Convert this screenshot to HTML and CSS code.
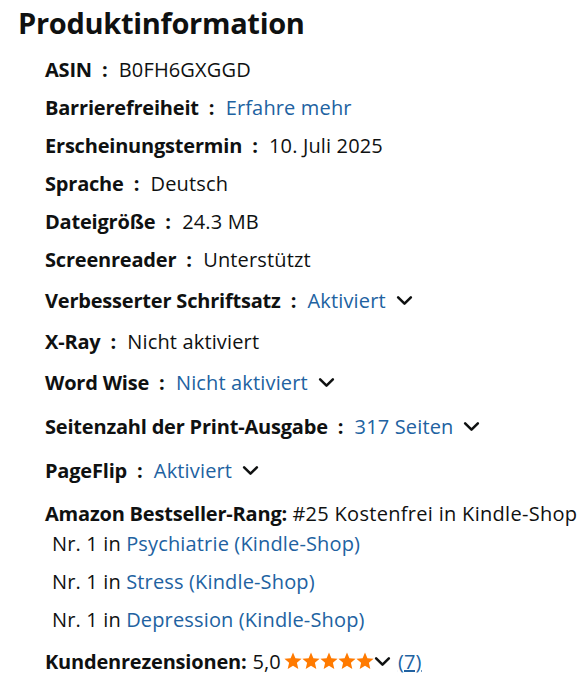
FILE: index.html
```html
<!DOCTYPE html>
<html lang="de">
<head>
<meta charset="utf-8">
<link rel="stylesheet" href="styles.css">
</head>
<body>
<div class="page">
  <h2 class="title">Produktinformation</h2>
  <ul class="details">
    <li class="row"><span class="label">ASIN</span><span class="sep">:</span><span>B0FH6GXGGD</span></li>
    <li class="row"><span class="label">Barrierefreiheit</span><span class="sep">:</span><a class="link">Erfahre mehr</a></li>
    <li class="row"><span class="label">Erscheinungstermin</span><span class="sep">:</span><span>10. Juli 2025</span></li>
    <li class="row"><span class="label">Sprache</span><span class="sep">:</span><span>Deutsch</span></li>
    <li class="row"><span class="label">Dateigröße</span><span class="sep">:</span><span>24.3 MB</span></li>
    <li class="row"><span class="label">Screenreader</span><span class="sep">:</span><span>Unterstützt</span></li>
    <li class="row tall"><span class="label">Verbesserter Schriftsatz</span><span class="sep">:</span><a class="link">Aktiviert</a><svg class="chev" viewBox="0 0 16 10"><path d="M2 2 L8 8 L14 2"/></svg></li>
    <li class="row"><span class="label">X-Ray</span><span class="sep">:</span><span>Nicht aktiviert</span></li>
    <li class="row tall"><span class="label">Word Wise</span><span class="sep">:</span><a class="link">Nicht aktiviert</a><svg class="chev" viewBox="0 0 16 10"><path d="M2 2 L8 8 L14 2"/></svg></li>
    <li class="row tall"><span class="label">Seitenzahl der Print-Ausgabe</span><span class="sep">:</span><a class="link">317 Seiten</a><svg class="chev" viewBox="0 0 16 10"><path d="M2 2 L8 8 L14 2"/></svg></li>
    <li class="row tall"><span class="label">PageFlip</span><span class="sep">:</span><a class="link">Aktiviert</a><svg class="chev" viewBox="0 0 16 10"><path d="M2 2 L8 8 L14 2"/></svg></li>
    <li class="rank">
      <div><span class="label">Amazon Bestseller-Rang:</span> <span class="wide">#25 Kostenfrei in Kindle-Shop</span></div>
      <ul class="ranks">
        <li>Nr. 1 in <a class="link">Psychiatrie (Kindle-Shop)</a></li>
        <li>Nr. 1 in <a class="link">Stress (Kindle-Shop)</a></li>
        <li>Nr. 1 in <a class="link">Depression (Kindle-Shop)</a></li>
      </ul>
    </li>
    <li class="reviews"><span class="label">Kundenrezensionen:</span><span class="score">5,0</span><span class="stars"><svg viewBox="0 0 90 18"><g fill="#ff7a00"><path id="s" d="M9 0.6 L11.4 6.3 L17.6 6.8 L12.9 10.8 L14.3 16.9 L9 13.7 L3.7 16.9 L5.1 10.8 L0.4 6.8 L6.6 6.3 Z"/><use href="#s" x="18"/><use href="#s" x="36"/><use href="#s" x="54"/><use href="#s" x="72"/></g></svg></span><svg class="chev small" viewBox="0 0 16 10"><path d="M2 2 L8 8 L14 2"/></svg><a class="link under">(7)</a></li>
  </ul>
</div>
</body>
</html>
```
FILE: styles.css
```css
* { box-sizing: border-box; }
body {
  margin: 0;
  background: #fff;
  color: #0f1111;
  font-family: "Open Sans", "Noto Sans", Arial, sans-serif;
}
.page {
  padding: 3px 0 0 18px;
}
.title {
  margin: 0;
  font-size: 29px;
  font-weight: 700;
  line-height: 40px;
  letter-spacing: -0.3px;
}
.details {
  list-style: none;
  margin: 7px 0 0 0;
  padding: 0 0 0 27px;
  font-size: 20px;
  letter-spacing: 0.15px;
}
.row {
  display: flex;
  align-items: center;
  height: 38px;
  white-space: nowrap;
}
.row.tall {
  height: 44px;
}
.label {
  font-weight: 700;
  letter-spacing: -0.2px;
}
.sep {
  font-weight: 700;
  margin: 0 11px 0 10px;
}
.link {
  color: #2162a1;
  text-decoration: none;
}
.chev {
  width: 17px;
  height: 11px;
  margin-left: 10px;
  fill: none;
  stroke: #0f1111;
  stroke-width: 2.4;
  stroke-linecap: round;
  stroke-linejoin: round;
}
.rank {
  margin-top: 9px;
  white-space: nowrap;
  line-height: 26px;
}
.wide {
  letter-spacing: 0.3px;
}
.ranks {
  list-style: none;
  margin: 4px 0 0 0;
  padding: 0 0 0 7px;
}
.ranks li {
  height: 38px;
  line-height: 26px;
}
.reviews {
  display: flex;
  align-items: center;
  height: 36px;
  margin-top: -2px;
  white-space: nowrap;
}
.score {
  margin-left: 6px;
  margin-right: 3px;
}
.stars svg {
  display: block;
  width: 90px;
  height: 18px;
}
.chev.small {
  margin-left: 0;
  margin-right: 7px;
  width: 17px;
}
.under {
  text-decoration: underline;
}
```
